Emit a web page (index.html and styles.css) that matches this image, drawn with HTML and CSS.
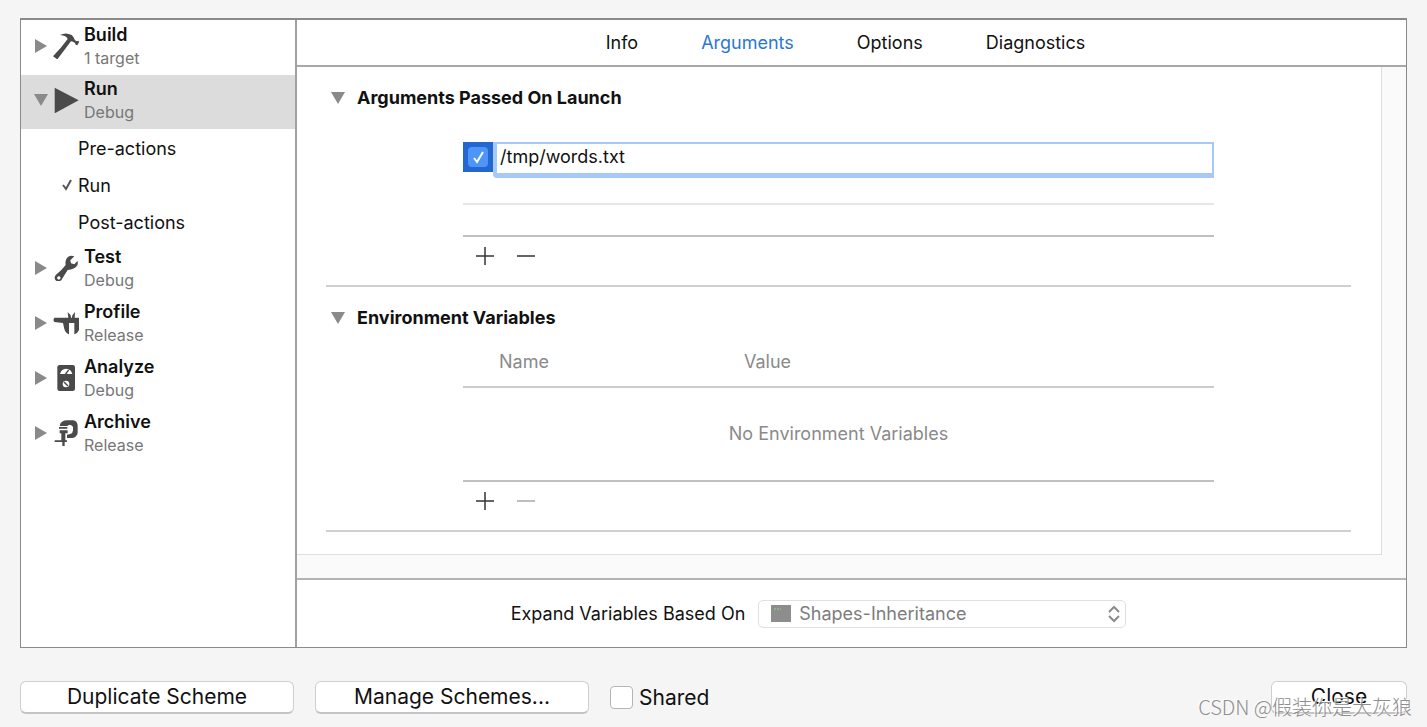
FILE: index.html
```html
<!DOCTYPE html>
<html lang="en">
<head>
<meta charset="utf-8">
<title>Scheme Editor</title>
<link rel="stylesheet" href="styles.css">
</head>
<body>
<div class="sheet">
  <main class="panel">
    <nav class="sidebar" aria-label="Scheme actions">
      <button class="action" type="button" aria-expanded="false">
        <svg class="disclosure" viewBox="0 0 14 14"><path d="M1 0L13 7L1 14Z"/></svg>
        <svg class="glyph" viewBox="130 66 78 78"><path d="M151 72Q168 63 186 72Q194 79 196 88L202 91L207 89L208 94L203 103L198 101L196 96L190 92L184 91L143 145L130 136Q152 114 174 84Q171 74 151 72Z"/></svg>
        <span class="labels"><span class="name">Build</span><span class="config">1 target</span></span>
      </button>
      <button class="action selected" type="button" aria-expanded="true">
        <svg class="disclosure" viewBox="0 0 14 14"><path d="M0 1L14 1L7 13Z"/></svg>
        <svg class="glyph" viewBox="130 231 78 78"><path d="M135 233L207 271L135 310Z"/></svg>
        <span class="labels"><span class="name">Run</span><span class="config">Debug</span></span>
      </button>
      <ul class="steps">
        <li class="step">Pre-actions</li>
        <li class="step"><svg class="step-check" viewBox="0 0 12 12"><path d="M2 6L5 10L10 1"/></svg>Run</li>
        <li class="step">Post-actions</li>
      </ul>
      <button class="action" type="button" aria-expanded="false">
        <svg class="disclosure" viewBox="0 0 14 14"><path d="M1 0L13 7L1 14Z"/></svg>
        <svg class="glyph" viewBox="130 357 78 78"><path fill-rule="evenodd" d="M194 361Q178 356 170 369Q166 378 168 387Q158 401 139 416Q132 424 137 432Q145 440 155 433Q162 421 174 402Q195 401 203 388Q206 381 203 375L194 385L184 382L182 373ZM147 421a5 5 0 1 0 1 0Z"/></svg>
        <span class="labels"><span class="name">Test</span><span class="config">Debug</span></span>
      </button>
      <button class="action" type="button" aria-expanded="false">
        <svg class="disclosure" viewBox="0 0 14 14"><path d="M1 0L13 7L1 14Z"/></svg>
        <svg class="glyph" viewBox="130 60 78 78"><path d="M134 83L176 83L174 66L183 76L184 83L187 83L188 76L196 66L195 83L208 83L208 120Q205 129 194 133L194 99L178 99L178 133Q167 129 164 117L160 99L134 96Q129 90 134 83Z"/></svg>
        <span class="labels"><span class="name">Profile</span><span class="config">Release</span></span>
      </button>
      <button class="action" type="button" aria-expanded="false">
        <svg class="disclosure" viewBox="0 0 14 14"><path d="M1 0L13 7L1 14Z"/></svg>
        <svg class="glyph" viewBox="130 225 78 78"><rect x="143" y="225" width="53" height="78" rx="7"/><path class="cut" d="M151 252Q154 237 169 236Q185 237 188 252L175 252Q169 248 164 252Z"/><path class="ink" d="M168 251L177 240"/><circle class="cut" cx="169" cy="282" r="10"/><path class="ink" d="M163 276L175 288"/></svg>
        <span class="labels"><span class="name">Analyze</span><span class="config">Debug</span></span>
      </button>
      <button class="action" type="button" aria-expanded="false">
        <svg class="disclosure" viewBox="0 0 14 14"><path d="M1 0L13 7L1 14Z"/></svg>
        <svg class="glyph" viewBox="130 390 78 78"><path d="M150 408Q152 391 174 391L190 391Q204 393 204 408L204 428Q202 441 188 444L172 444L172 434L182 432Q190 429 190 421L190 412Q188 404 178 404L173 408ZM148 411L173 411L173 416L148 416ZM150 421L174 421L174 430L167 430L167 451L172 451L172 456L165 456L165 468L158 468L158 456L135 456L135 451L155 451L155 430L150 430Z"/></svg>
        <span class="labels"><span class="name">Archive</span><span class="config">Release</span></span>
      </button>
    </nav>

    <div class="detail">
      <div class="tabs" role="tablist">
        <button class="tab" type="button" role="tab">Info</button>
        <button class="tab current" type="button" role="tab" aria-selected="true">Arguments</button>
        <button class="tab" type="button" role="tab">Options</button>
        <button class="tab" type="button" role="tab">Diagnostics</button>
      </div>

      <div class="scroller">
        <div class="page">
          <section class="section">
            <h2 class="heading"><svg class="disclosure" viewBox="0 0 14 14"><path d="M0 1L14 1L7 13Z"/></svg>Arguments Passed On Launch</h2>
            <div class="block arguments">
              <div class="argument">
                <label class="enable"><input class="tick" type="checkbox" checked aria-label="Pass this argument"><svg class="tick-mark" viewBox="0 0 20 20"><path d="M6 11L9 15L15 5"/></svg></label>
                <input class="value" type="text" value="/tmp/words.txt" aria-label="Argument">
              </div>
              <div class="empty-row"></div>
              <div class="empty-row last"></div>
              <div class="tools">
                <button class="tool" type="button" aria-label="Add argument"><svg class="tool-icon" viewBox="0 0 20 20"><path d="M1 10H19M10 1V19"/></svg></button>
                <button class="tool" type="button" aria-label="Remove argument"><svg class="tool-icon" viewBox="0 0 20 20"><path d="M1 10H19"/></svg></button>
              </div>
            </div>
          </section>
          <section class="section">
            <h2 class="heading"><svg class="disclosure" viewBox="0 0 14 14"><path d="M0 1L14 1L7 13Z"/></svg>Environment Variables</h2>
            <div class="block">
              <table class="variables">
                <thead><tr><th class="col-name">Name</th><th>Value</th></tr></thead>
                <tbody><tr><td colspan="2">No Environment Variables</td></tr></tbody>
              </table>
              <div class="tools">
                <button class="tool" type="button" aria-label="Add variable"><svg class="tool-icon" viewBox="0 0 20 20"><path d="M1 10H19M10 1V19"/></svg></button>
                <button class="tool" type="button" aria-label="Remove variable" disabled><svg class="tool-icon" viewBox="0 0 20 20"><path d="M1 10H19"/></svg></button>
              </div>
            </div>
          </section>
        </div>
      </div>

      <div class="expand">
        <label for="target">Expand Variables Based On</label>
        <div class="popup">
          <select class="popup-select" id="target" disabled><option>Shapes-Inheritance</option></select>
          <svg class="popup-app" viewBox="0 0 20 17"><rect width="20" height="17" fill="#8d8d8d"/><path d="M3 4H10" stroke="#8fd08f" stroke-width="1" stroke-dasharray="2 1"/></svg>
          <svg class="popup-arrows" viewBox="0 0 12 18"><path d="M1 7L6 2L11 7M1 11L6 16L11 11"/></svg>
        </div>
      </div>
    </div>
  </main>

  <footer class="footer">
    <button class="push wide" type="button">Duplicate Scheme</button>
    <button class="push wide" type="button">Manage Schemes...</button>
    <label class="shared"><input class="box" type="checkbox">Shared</label>
    <button class="push close" type="button">Close</button>
  </footer>
  <div class="watermark">CSDN @假装你是大灰狼</div>
</div>
</body>
</html>
```
FILE: styles.css
```css
* { box-sizing: border-box; }

body {
  margin: 0;
  background: #f5f5f5;
  color: #111;
  font: 18px/24px Inter, "Liberation Sans", "Noto Sans CJK SC", sans-serif;
}

button, input, select { font: inherit; color: inherit; }
button { padding: 0; border: 0; background: none; }

.sheet {
  position: relative;
  display: flex;
  flex-direction: column;
  gap: 33px;
  min-height: 100vh;
  padding: 18px 20px 13px;
}

.panel {
  display: grid;
  grid-template-columns: 276px 1fr;
  flex: 1;
  border: 1px solid #8a8a8a;
  border-top-width: 2px;
  background: #fff;
}

.sidebar { border-right: 2px solid #a0a0a0; }

.action {
  display: flex;
  align-items: center;
  width: 100%;
  height: 55px;
  padding: 0 0 4px 13px;
  text-align: left;
}
.selected { background: #dcdcdc; border-bottom: 1px solid #fff; }

.disclosure { width: 14px; height: 14px; fill: #8a8a8a; }
.glyph { width: 26px; height: 26px; margin: 0 5px; fill: #4a4a4a; }
.cut { fill: #fff; }
.ink { stroke: #4a4a4a; stroke-width: 4; }

.labels { display: flex; flex-direction: column; }
.name { font-weight: 600; line-height: 24px; }
.config { color: #777; font-size: 16px; line-height: 22px; }

.steps { margin: 0; padding: 0 0 1px; list-style: none; }
.step {
  position: relative;
  height: 37px;
  padding-left: 57px;
  line-height: 37px;
}
.step-check {
  position: absolute;
  left: 40px;
  top: 12px;
  width: 12px;
  height: 12px;
  fill: none;
  stroke: #555;
  stroke-width: 2;
}

.detail { display: flex; flex-direction: column; min-width: 0; }

.tabs {
  display: flex;
  justify-content: center;
  gap: 63px;
  height: 47px;
  padding-right: 12px;
  border-bottom: 2px solid #a8a8a8;
}
.current { color: #2a77d4; }

.scroller {
  flex: 1;
  padding: 0 24px 23px 0;
  border-bottom: 2px solid #b4b4b4;
  background: #fafafa;
}
.page {
  height: 100%;
  padding: 0 30px 0 29px;
  border: solid #dedede;
  border-width: 0 1px 1px 0;
  background: #fff;
}

.section { border-bottom: 2px solid #d0d0d0; padding: 19px 0 16px; }
.heading {
  display: flex;
  align-items: center;
  gap: 12px;
  margin: 0;
  padding-left: 5px;
  font-size: 18px;
  font-weight: 700;
}
.block { margin: 0 137px; }
.arguments { padding-top: 32px; }

.argument { display: flex; height: 36px; }
.enable {
  display: grid;
  place-items: center;
  width: 30px;
  height: 30px;
  background: #2467d1;
}
.tick {
  grid-area: 1 / 1;
  appearance: none;
  width: 20px;
  height: 20px;
  margin: 0;
  border-radius: 4px;
  background: #4d96f7;
}
.tick-mark {
  grid-area: 1 / 1;
  width: 20px;
  height: 20px;
  fill: none;
  stroke: #fff;
  stroke-width: 2;
}
.value {
  flex: 1;
  min-width: 0;
  padding: 0 4px 4px 3px;
  border: solid #a6c9f8;
  border-width: 2px 2px 5px 4px;
  border-radius: 0 0 0 4px;
  outline: 0;
  background: #fff;
}
.empty-row { height: 27px; border-bottom: 2px solid #e6e6e6; }
.last { height: 32px; border-color: #c0c0c0; }

.tools { display: flex; gap: 21px; padding: 9px 12px 0; }
.tool { display: flex; width: 20px; height: 23px; }
.tool-icon { width: 20px; height: 20px; fill: none; stroke: #333; stroke-width: 1.5; }
.tool:disabled .tool-icon { stroke: #a8a8a8; }

.variables { width: 100%; border-collapse: collapse; color: #8a8a8a; }
.variables th {
  height: 57px;
  padding: 8px 0 0;
  border-bottom: 2px solid #ccc;
  font-weight: 400;
  text-align: left;
}
.variables .col-name { width: 281px; padding-left: 36px; }
.variables td {
  height: 94px;
  padding: 0;
  border-bottom: 2px solid #c0c0c0;
  text-align: center;
}

.expand {
  display: flex;
  align-items: center;
  justify-content: center;
  gap: 13px;
  height: 67px;
  padding-right: 66px;
}
.popup { display: grid; align-items: center; width: 368px; }
.popup-select {
  grid-area: 1 / 1;
  appearance: none;
  height: 28px;
  padding: 0 40px;
  border: 1px solid #e0e0e0;
  border-radius: 5px;
  background: #fff;
  color: #7d7d7d;
  opacity: 1;
}
.popup-app { grid-area: 1 / 1; width: 20px; height: 17px; margin-left: 13px; }
.popup-arrows {
  grid-area: 1 / 1;
  justify-self: end;
  width: 12px;
  height: 18px;
  margin-right: 6px;
  fill: none;
  stroke: #8c8c8c;
  stroke-width: 2;
}

.footer { display: flex; align-items: center; gap: 21px; font-size: 21px; }
.push {
  height: 33px;
  border: 1px solid #cfcfcf;
  border-bottom: 2px solid #c4c4c4;
  border-radius: 6px;
  background: #fff;
}
.wide { width: 274px; }
.close { width: 136px; margin-left: auto; }
.shared { display: flex; align-items: center; gap: 6px; }
.box {
  appearance: none;
  width: 23px;
  height: 23px;
  margin: 0;
  border: 1px solid #b5b5b5;
  border-radius: 4px;
  background: #fff;
}

.watermark {
  position: absolute;
  right: 15px;
  bottom: 7px;
  color: #8e8e8e;
  font: 300 20px/26px "Noto Sans CJK SC", sans-serif;
  text-shadow: -1px -1px 0 #fff;
}
```
